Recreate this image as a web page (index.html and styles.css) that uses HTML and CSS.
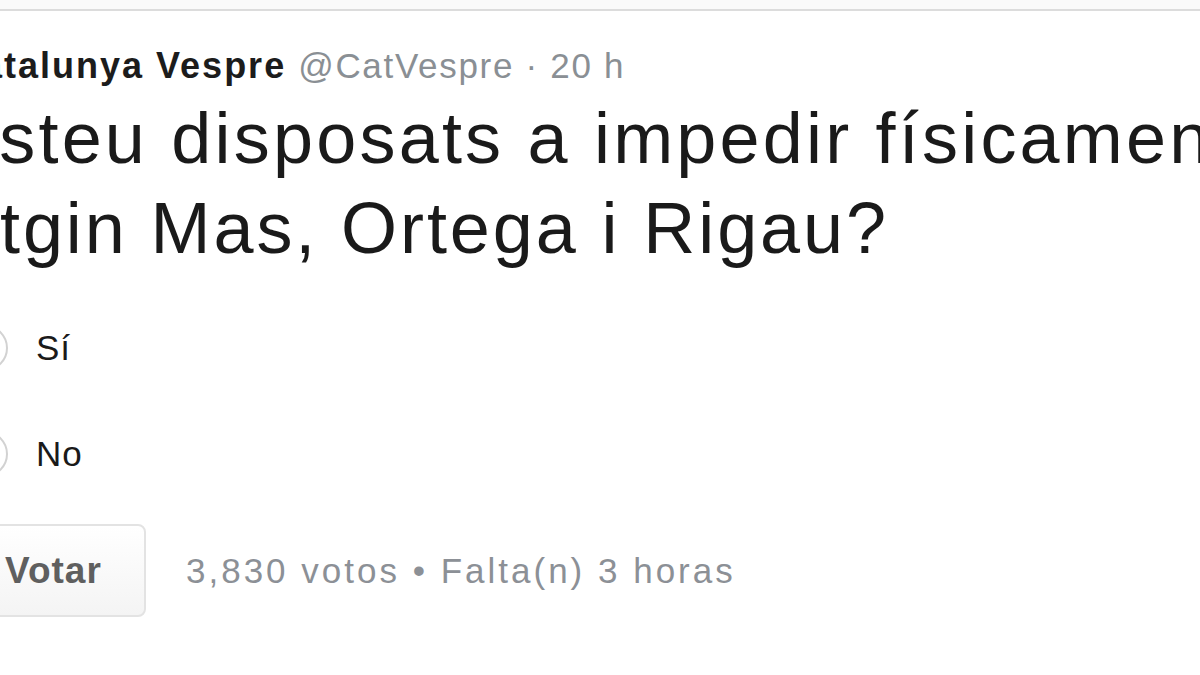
FILE: index.html
```html
<!DOCTYPE html>
<html lang="ca">
<head>
<meta charset="utf-8">
<title>Enquesta</title>
<link rel="stylesheet" href="styles.css">
</head>
<body>
<div class="topbar"></div>
<div class="tweet">
  <div class="header">
    <span class="name">Catalunya Vespre</span>
    <span class="handle">@CatVespre · 20 h</span>
  </div>
  <div class="text">
    <div class="line line1">Esteu disposats a impedir físicament</div>
    <div class="line line2">tgin Mas, Ortega i Rigau?</div>
  </div>
  <div class="options">
    <label class="option"><span class="radio"></span><span class="opt-text">Sí</span></label>
    <label class="option"><span class="radio"></span><span class="opt-text">No</span></label>
  </div>
  <div class="footer">
    <button class="vote">Votar</button>
    <span class="meta">3,830 votos • Falta(n) 3 horas</span>
  </div>
</div>
</body>
</html>
```

FILE: styles.css
```css
html, body {
  margin: 0;
  padding: 0;
  background: #ffffff;
  overflow: hidden;
  width: 1200px;
  height: 675px;
}
body {
  font-family: "Liberation Sans", Arial, sans-serif;
  color: #14171a;
}
.topbar {
  height: 9px;
  background: #fafafa;
  border-bottom: 2px solid #dcdcdc;
}
.tweet {
  display: flex;
  flex-direction: column;
}
.header {
  margin-left: -46px;
  margin-top: 33px;
  height: 44px;
  line-height: 44px;
  white-space: nowrap;
  display: flex;
  gap: 12px;
}
.name {
  font-weight: bold;
  font-size: 36px;
  letter-spacing: 2px;
  color: #1c1c1c;
}
.handle {
  font-size: 35px;
  letter-spacing: 1.7px;
  color: #8a8f94;
}
.text {
  margin-top: 5px;
  font-size: 72px;
  line-height: 90px;
  color: #1a1a1a;
  white-space: nowrap;
}
.line1 {
  margin-left: -52px;
  letter-spacing: 3.2px;
}
.line2 {
  margin-left: 0;
  letter-spacing: 2.9px;
}
.options {
  display: flex;
  flex-direction: column;
  gap: 56px;
  margin-top: 50px;
}
.option {
  display: flex;
  align-items: center;
  gap: 28px;
  margin-left: -38px;
  height: 50px;
}
.radio {
  width: 46px;
  height: 46px;
  border-radius: 50%;
  border: 2px solid #d2d2d2;
  box-sizing: border-box;
  flex: none;
}
.opt-text {
  font-size: 35px;
  letter-spacing: 1px;
  color: #1a1a1a;
}
.footer {
  display: flex;
  align-items: center;
  gap: 40px;
  margin-top: 45px;
}
.vote {
  margin-left: -30px;
  width: 176px;
  height: 93px;
  box-sizing: border-box;
  text-align: left;
  border: 2px solid #e3e3e3;
  border-radius: 8px;
  background: linear-gradient(#ffffff, #f4f4f4);
  font-family: "Liberation Sans", Arial, sans-serif;
  font-weight: bold;
  font-size: 37px;
  letter-spacing: 1px;
  color: #5f5f5f;
  padding: 0 0 0 33px;
}
.meta {
  font-size: 35px;
  letter-spacing: 3px;
  color: #8c9096;
}
```
